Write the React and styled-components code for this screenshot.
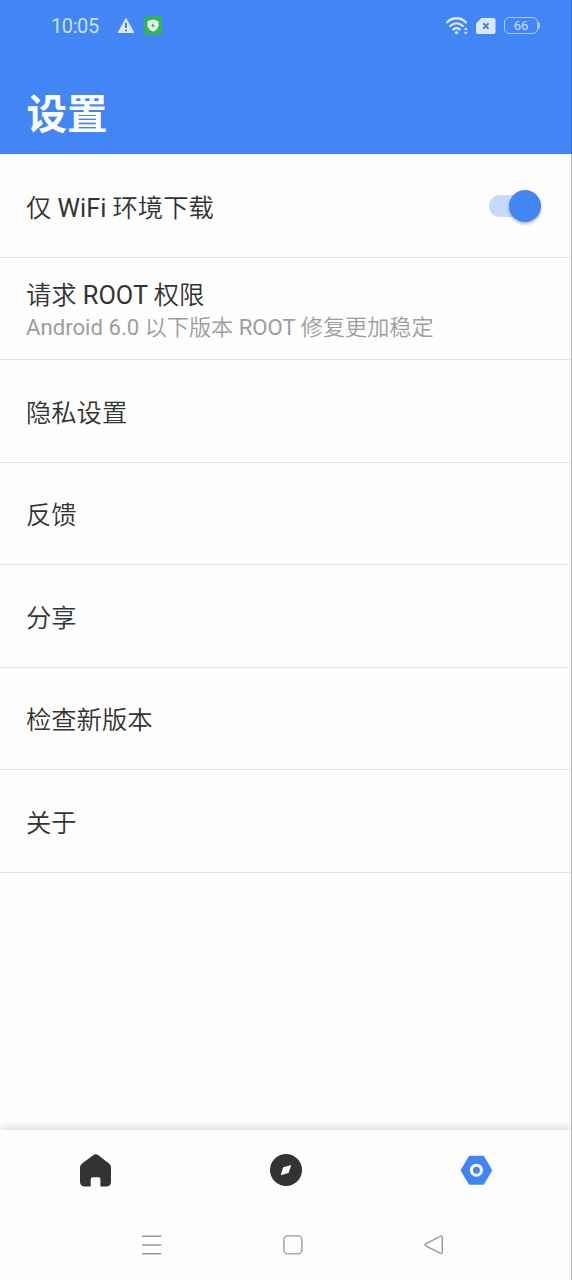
import React from "react";
import styled, { createGlobalStyle } from "styled-components";

const blue = "#4285f4";

const GlobalStyle = createGlobalStyle`
  * { box-sizing: border-box; }
  body {
    margin: 0;
    background: #fff;
    font-family: Roboto, "Noto Sans CJK SC DemiLight", "Noto Sans CJK SC Light", "Noto Sans CJK SC", sans-serif;
  }
`;

const Screen = styled.div`
  width: 572px;
  height: 1280px;
  display: flex;
  flex-direction: column;
  background: #fefefe;
  overflow: hidden;
`;

const Header = styled.header`
  height: 154px;
  flex: none;
  background: ${blue};
  color: #fff;
  border-right: 1px solid #3a74d4;
`;

const StatusBar = styled.div`
  height: 51px;
  display: flex;
  align-items: center;
  justify-content: space-between;
  padding: 0 31px 0 51px;
`;

const StatusGroup = styled.div`
  display: flex;
  align-items: center;
  gap: ${(p) => p.$gap}px;
`;

const Clock = styled.span`
  font-size: 20px;
  line-height: 24px;
  width: 56px;
  letter-spacing: -0.4px;
  color: #cfe0fd;
  margin-top: 1px;
`;

const Battery = styled.div`
  display: flex;
  align-items: center;
  margin-left: 1px;
  &::after {
    content: "";
    width: 2px;
    height: 7px;
    background: #a9c8fb;
    border-radius: 0 2px 2px 0;
  }
`;

const BatteryCell = styled.div`
  width: 34px;
  height: 17px;
  border: 1.5px solid #a9c8fb;
  border-radius: 5px;
  font-size: 13px;
  line-height: 15px;
  text-align: center;
  color: #cfe0fd;
`;

const Title = styled.h1`
  margin: 32px 0 0 26.5px;
  font-family: "Noto Sans CJK SC", sans-serif;
  font-size: 40.5px;
  line-height: 58px;
  font-weight: 700;
`;

const Body = styled.div`
  flex: 1;
  display: flex;
  flex-direction: column;
  border-right: 1px solid #b4b5b7;
`;

const List = styled.main`
  flex: 1;
  padding-top: 1px;
`;

const Row = styled.div`
  height: 102.5px;
  padding: 0 30px 0 26px;
  display: flex;
  align-items: center;
  justify-content: space-between;
  border-bottom: 1px solid #e2e2e2;
`;

const Label = styled.div`
  font-size: 25.3px;
  line-height: 32px;
  color: #333;
  padding-top: ${(p) => (p.$stacked ? 3 : 6)}px;
`;

const Caption = styled.div`
  font-size: 22.15px;
  line-height: 32px;
  color: #9d9d9d;
  margin-top: -1px;
`;

const Copy = styled.div`
  padding-top: 4px;
`;

const Track = styled.div`
  width: 51px;
  height: 22px;
  display: flex;
  align-items: center;
  justify-content: flex-end;
  margin-right: 1px;
  background: #c6dafc;
  border-radius: 11px;
`;

const Thumb = styled.div`
  width: 32px;
  height: 32px;
  flex: none;
  margin-right: -1px;
  border-radius: 50%;
  background: ${blue};
  box-shadow: 0 2px 3px rgba(0, 0, 0, 0.28);
`;

const TabBar = styled.nav`
  height: 80px;
  flex: none;
  display: grid;
  grid-template-columns: repeat(3, 1fr);
  justify-items: center;
  align-items: center;
  padding-left: 1px;
  background: #fefefe;
  box-shadow: 0 -1px 10px rgba(0, 0, 0, 0.19);
  clip-path: inset(-20px 0 0 0);
`;

const NavBar = styled.footer`
  height: 70px;
  flex: none;
  display: flex;
  justify-content: space-between;
  padding: 24px 127px 0 141px;
  background: #fefefe;
`;

const Wifi = () => (
  <svg width="24" height="20" viewBox="0 0 24 20" fill="none" stroke="#dce8fd" strokeWidth="2.3" strokeLinecap="round">
    <path d="M2 6.3C7.6.9 15.4.9 21 6.3M5.2 10C9 6.4 14 6.4 17.8 10M8.3 13.4C10.3 11.7 12.7 11.7 14.7 13.4" />
    <circle cx="11.5" cy="16.6" r="1.7" fill="#dce8fd" stroke="none" />
    <path d="M18.3 14L20.8 11L23.3 14ZM18.3 15.8L20.8 18.8L23.3 15.8Z" fill="#bcd4fc" stroke="none" />
  </svg>
);

const SimOff = () => (
  <svg width="20" height="16" viewBox="0 0 20 16">
    <path d="M5.5 0H17.5Q19.5 0 19.5 2V14Q19.5 16 17.5 16H2Q0 16 0 14V5.5Z" fill="#dce8fd" />
    <path d="M7.3 5.3L12.5 10.7M12.5 5.3L7.3 10.7" stroke="#4e83dc" strokeWidth="2" />
  </svg>
);

const Warning = () => (
  <svg width="18" height="17" viewBox="0 0 18 17">
    <path d="M9 1.5L16.8 15.5H1.2Z" fill="#dce8fd" stroke="#dce8fd" strokeLinejoin="round" />
    <path d="M9 5.8V11" stroke="#517caf" strokeWidth="2" />
    <circle cx="9" cy="13.3" r="1.1" fill="#517caf" />
  </svg>
);

const Shield = () => (
  <svg width="18" height="19" viewBox="0.5 0 18 19">
    <rect x="0.5" width="18" height="19" rx="4" fill="#2fb457" />
    <path d="M9.5 3.5L15 5.2V9.5Q14.5 13.5 9.5 15.6Q4.5 13.5 4 9.5V5.2Z" fill="#effff2" />
    <path d="M10.1 6.2L7.3 10H9.1L8.9 12.6L11.7 8.9H9.9Z" fill="#2fb457" />
  </svg>
);

const Home = () => (
  <svg width="32" height="33" viewBox="0 0 32 33">
    <path d="M13.2 1.2Q15.8-.8 18.4 1.2L29 9.4Q31 11 31 13.5V27.5Q31 32.5 26 32.5H20.4V25.3Q20.4 23.3 18.4 23.3H12.7Q10.7 23.3 10.7 25.3V32.5H5Q0 32.5 0 27.5V13.5Q0 11 2 9.4Z" fill="#333" />
  </svg>
);

const Compass = () => (
  <svg width="32" height="32" viewBox="0 0 32 32">
    <circle cx="16" cy="16" r="16" fill="#333" />
    <path d="M21.3 11L18.5 19L10.7 21.3L13.2 13.2Z" fill="#fff" />
  </svg>
);

const HexNut = () => (
  <svg width="32" height="30" viewBox="-0.4 -0.5 32 30">
    <path d="M9.5 1.7H22.5L30.2 14.7L22.5 27.7H9.5L1.8 14.7Z" fill={blue} stroke={blue} strokeWidth="3" strokeLinejoin="round" />
    <circle cx="16" cy="14.7" r="5" fill="none" stroke="#fff" strokeWidth="3" />
  </svg>
);

const Menu = () => (
  <svg width="21" height="21" viewBox="0 0 21 21" stroke="#999" strokeWidth="1.5">
    <path d="M1 2.2H20.3M1 11H20.3M1 19.7H20.3" />
  </svg>
);

const Square = () => (
  <svg width="21" height="21" viewBox="0 0 21 21" fill="none" stroke="#999" strokeWidth="1.4">
    <rect x="1.9" y="1.9" width="18" height="18" rx="4" />
  </svg>
);

const Back = () => (
  <svg width="21" height="21" viewBox="0 0 21 21" fill="none" stroke="#999" strokeWidth="1.4">
    <path d="M17 2.3Q19.3 1.3 19.3 3.3V18.2Q19.3 20.2 17 19.2L2.7 11.8Q1.2 10.8 2.7 9.8Z" />
  </svg>
);

const links = ["隐私设置", "反馈", "分享", "检查新版本", "关于"];

export default function App() {
  return (
    <>
      <GlobalStyle />
      <Screen>
        <Header>
          <StatusBar>
            <StatusGroup $gap={9.5}>
              <Clock>10:05</Clock>
              <Warning />
              <Shield />
            </StatusGroup>
            <StatusGroup $gap={7}>
              <Wifi />
              <SimOff />
              <Battery>
                <BatteryCell>66</BatteryCell>
              </Battery>
            </StatusGroup>
          </StatusBar>
          <Title>设置</Title>
        </Header>
        <Body>
          <List>
            <Row>
              <Label>仅 WiFi 环境下载</Label>
              <Track>
                <Thumb />
              </Track>
            </Row>
            <Row>
              <Copy>
                <Label $stacked>请求 ROOT 权限</Label>
                <Caption>Android 6.0 以下版本 ROOT 修复更加稳定</Caption>
              </Copy>
            </Row>
            {links.map((text) => (
              <Row key={text}>
                <Label>{text}</Label>
              </Row>
            ))}
          </List>
          <TabBar>
            <Home />
            <Compass />
            <HexNut />
          </TabBar>
          <NavBar>
            <Menu />
            <Square />
            <Back />
          </NavBar>
        </Body>
      </Screen>
    </>
  );
}
